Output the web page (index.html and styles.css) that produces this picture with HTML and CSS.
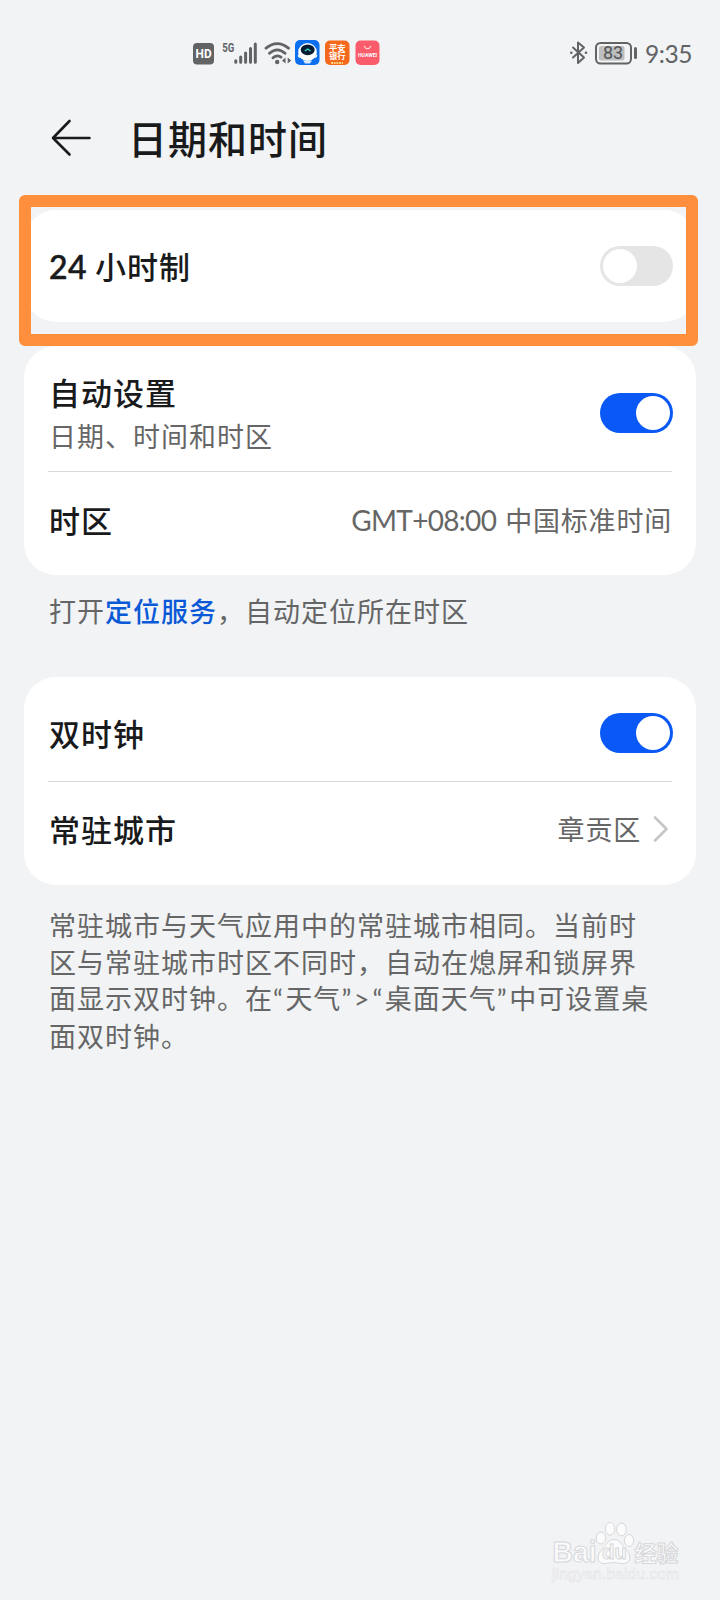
FILE: index.html
```html
<!DOCTYPE html>
<html lang="zh-CN">
<head>
<meta charset="utf-8">
<title>日期和时间</title>
<link rel="stylesheet" href="styles.css">
</head>
<body>
<div class="screen">
  <header class="status">
    <svg class="status-icons" width="188" height="27" viewBox="192 39 188 27">
      <rect x="193" y="43" width="21" height="21.5" rx="4" fill="#626365"/>
      <text x="195.6" y="58.4" class="hd" textLength="16" lengthAdjust="spacingAndGlyphs">HD</text>
      <text x="222.3" y="51.6" class="five-g" textLength="12" lengthAdjust="spacingAndGlyphs">5G</text>
      <g stroke="#626365" stroke-width="3" stroke-linecap="round">
        <path d="M235.8 60.7v1.5M240.7 57v5.2M245.6 53v9.2M250.5 48.5v13.7M255.3 44v18.2"/>
      </g>
      <g fill="none" stroke="#626365" stroke-width="2.8" stroke-linecap="round">
        <path d="M266 48.2Q277.3 39 288.5 48.2M269.5 53.3Q277.3 46.5 285 53.3M273 57.8Q277.3 54.2 281 57.2"/>
      </g>
      <circle cx="277.2" cy="62" r="2.2" fill="#626365"/>
      <path d="M285.5 57.500v6l-3.500-3zM287.700 57.500v6l3.500-3z" fill="#626365"/>
      <rect x="295" y="40" width="24.500" height="25" rx="5" fill="#0b6ff0"/>
      <path d="M298 54q-1 4 3 4zM317 54q1 4-3 4z" fill="#fff"/>
      <ellipse cx="307.500" cy="52" rx="9.300" ry="9" fill="#fff"/>
      <ellipse cx="307.700" cy="49.800" rx="7" ry="5.400" fill="#071d34"/>
      <path d="M304.800 51l2.900-2 2.900 2" fill="none" stroke="#31d7c1" stroke-width="1.300"/>
      <path d="M303 60.500h9l-2 3h-5z" fill="#d8e9ff"/>
      <rect x="325" y="40.500" width="24.500" height="24.500" rx="5" fill="#f5691c"/>
      <text class="app-text"><tspan x="329" y="50.600">平安</tspan><tspan x="329" y="59.300">银行</tspan></text>
      <path d="M331 63h12" stroke="#ffd27c" stroke-width="1.800" stroke-dasharray="2 .7"/>
      <rect x="355.500" y="40.500" width="24" height="24.500" rx="5" fill="#fb5c6b"/>
      <path d="M364 46q3.500 5.600 7 0" fill="none" stroke="#ffe0e2" stroke-width="1.100"/>
      <text x="358" y="56.500" class="huawei" textLength="19" lengthAdjust="spacingAndGlyphs">HUAWEI</text>
    </svg>
    <svg class="status-right" width="69" height="27" viewBox="569 39 69 27">
      <path d="M573 47.500l11 10-6 5.500V42.500l6 5-11 10" fill="none" stroke="#626365" stroke-width="2" stroke-linejoin="round" stroke-linecap="round"/>
      <circle cx="571.300" cy="52.700" r="1.300" fill="#626365"/><circle cx="586" cy="52.700" r="1.300" fill="#626365"/>
      <rect x="596" y="43" width="35" height="20.500" rx="4.500" fill="none" stroke="#626365" stroke-width="2"/>
      <rect x="599" y="46" width="25.500" height="14.500" rx="2" fill="#bdbec0"/>
      <text x="613" y="59.200" class="battery" text-anchor="middle">83</text>
      <path d="M635.500 48.500v9" stroke="#626365" stroke-width="3" stroke-linecap="round"/>
    </svg>
    <span class="clock">9:35</span>
  </header>

  <div class="title-bar">
    <svg class="back" width="40" height="38" viewBox="0 0 40 38" fill="none" stroke="#191a1b" stroke-width="2.600" stroke-linecap="round" stroke-linejoin="round">
      <path d="M18.500 2L2 19l16.500 16.500M2 19h36.500"/>
    </svg>
    <h1 class="title">日期和时间</h1>
  </div>

  <main class="content">
    <section class="card card-format">
      <div class="row row-format">
        <span class="label"><span class="num">24</span> 小时制</span>
        <span class="toggle"></span>
      </div>
      <div class="highlight"></div>
    </section>

    <section class="card card-zone">
      <div class="row row-auto">
        <div class="labels">
          <span class="label">自动设置</span>
          <span class="sub">日期、时间和时区</span>
        </div>
        <span class="toggle on"></span>
      </div>
      <div class="row row-zone">
        <span class="label">时区</span>
        <span class="value"><span class="gmt">GMT+08:00</span>中国标准时间</span>
      </div>
    </section>

    <p class="hint">打开<a class="link">定位服务</a>，自动定位所在时区</p>

    <section class="card card-clock">
      <div class="row row-dual">
        <span class="label">双时钟</span>
        <span class="toggle on"></span>
      </div>
      <div class="row row-city">
        <span class="label">常驻城市</span>
        <span class="value">章贡区</span>
        <svg class="chevron" width="16" height="28" viewBox="0 0 16 28" fill="none" stroke="#c6c6c7" stroke-width="2.600" stroke-linecap="round" stroke-linejoin="round"><path d="M2 2.500L13.500 14 2 25.500"/></svg>
      </div>
    </section>

    <p class="note">常驻城市与天气应用中的常驻城市相同。当前时<br>区与常驻城市时区不同时，自动在熄屏和锁屏界<br>面显示双时钟。在<span class="q">“</span>天气<span class="q">”</span><span class="gt">&gt;</span><span class="q">“</span>桌面天气<span class="q">”</span>中可设置桌<br>面双时钟。</p>
  </main>

  <svg class="watermark" width="136" height="66" viewBox="550 1518 136 66">
    <g fill="#fbfbfc" stroke="#d6d7d9" stroke-width="1">
      <text x="552.500" y="1561.500" class="wm-big" textLength="44" lengthAdjust="spacingAndGlyphs">Bai</text>
      <ellipse cx="601" cy="1538" rx="4.800" ry="6"/>
      <ellipse cx="610" cy="1528.800" rx="4.800" ry="6.300"/>
      <ellipse cx="621.500" cy="1529.500" rx="4.800" ry="6.300"/>
      <ellipse cx="629" cy="1540.500" rx="4.600" ry="6"/>
      <path d="M614 1539.500c6 0 8 6 12 10 5 5 6 13-2 14-4 .5-6-1-10-1s-7 1.500-11 1c-7-1-6-9-1-14 4-4 6-10 12-10z"/>
      <text x="614.500" y="1558.500" class="wm-du" text-anchor="middle">du</text>
      <text x="634.500" y="1560.500" class="wm-cn" textLength="44">经验</text>
    </g>
    <text x="552" y="1578.500" class="wm-url" textLength="127">jingyan.baidu.com</text>
  </svg>
</div>
</body>
</html>
```
FILE: styles.css
```css
* { box-sizing: border-box; }
body {
  margin: 0;
  background: #f1f3f5;
  font-family: "Noto Sans CJK SC", sans-serif;
  color: #191a1b;
}
.screen { position: relative; width: 720px; height: 1600px; overflow: hidden; }

.status { display: flex; align-items: flex-start; height: 100px; padding: 39px 0 0 192px; }
.status-right { margin-left: 189px; }
.clock {
  margin-left: 7px;
  font: 24.500px/30px Lato, sans-serif;
  letter-spacing: -.4px;
  color: #626365;
}
.hd { font: bold 12.500px Roboto, sans-serif; fill: #fff; }
.five-g { font: bold 12px Roboto, sans-serif; fill: #626365; }
.app-text { font: bold 8.300px "Noto Sans CJK SC", sans-serif; fill: #fff; }
.huawei { font: bold 5px Roboto, sans-serif; fill: #fff; }
.battery { font: 18px Roboto, sans-serif; fill: #525355; }

.title-bar { display: flex; height: 110px; padding: 19px 0 0 51px; }
.title {
  margin: -12px 0 0 37px;
  font-size: 39px;
  font-weight: 500;
  line-height: 60px;
  letter-spacing: 1px;
}

.content { padding: 0 24px; }
.card { position: relative; border-radius: 32px; background: #fff; padding: 0 24px; }
.row { display: flex; align-items: center; justify-content: space-between; }
.row + .row { border-top: 1px solid #d8d8d9; }
.label { font-size: 31px; font-weight: 500; line-height: 44px; letter-spacing: 1px; padding-left: 1px; }
.num { font-family: Lato, sans-serif; font-size: 32px; letter-spacing: .4px; -webkit-text-stroke: .5px #191a1b; }
.labels { display: flex; flex-direction: column; }
.sub { font-size: 27px; line-height: 40px; letter-spacing: 1px; color: #666; position: relative; padding: 2px 0 0 1px; }
.value { font-size: 27px; line-height: 40px; letter-spacing: .8px; color: #666; }
.gmt { font-family: Lato, sans-serif; font-size: 28px; margin-right: 9px; letter-spacing: -.7px; }

.toggle { width: 73px; height: 40px; margin-right: -.5px; padding: 3px; border-radius: 20px; background: #e5e5e5; display: flex; }
.toggle::before { content: ""; width: 34px; height: 34px; border-radius: 50%; background: #fff; }
.toggle.on { background: #0a59f7; justify-content: flex-end; }

.card-format { height: 112px; z-index: 1; }
.row-format { height: 112px; }
.highlight {
  position: absolute;
  left: -5px;
  top: -15.500px;
  width: 679px;
  height: 151.500px;
  border: 12px solid #ff8f3c;
  border-radius: 6px;
}

.card-zone { height: 229px; margin-top: 24px; }
.row-auto { height: 125px; padding-top: 8px; }
.row-zone { height: 101px; padding-bottom: 5px; }

.hint { margin: 16px 0 0 25px; height: 86px; font-size: 27px; line-height: 40px; letter-spacing: 1px; color: #666; }
.link { color: #0a59d7; font-weight: 500; }

.card-clock { height: 208px; }
.row-dual { height: 104px; padding-top: 8px; }
.row-city { height: 96px; padding-bottom: 2px; }
.row-city .value { margin-left: auto; }
.chevron { margin: 0 3px 0 12px; }

.note { margin: 22px 0 0 25px; font-size: 27px; line-height: 36.600px; letter-spacing: 1px; color: #666; white-space: nowrap; }
.q { font-family: Lato, sans-serif; letter-spacing: 2.500px; }
.gt { font-family: Lato, sans-serif; letter-spacing: 3px; }

.watermark { position: absolute; left: 550px; top: 1518px; }
.wm-big { font: bold 29px "Liberation Sans", sans-serif; }
.wm-du { font: bold 20px "Liberation Sans", sans-serif; }
.wm-cn { font: bold 22px "Noto Sans CJK SC", sans-serif; }
.wm-url { font: 15.500px "Liberation Sans", sans-serif; fill: #fafafb; stroke: #dfe0e2; stroke-width: .5px; }
```
